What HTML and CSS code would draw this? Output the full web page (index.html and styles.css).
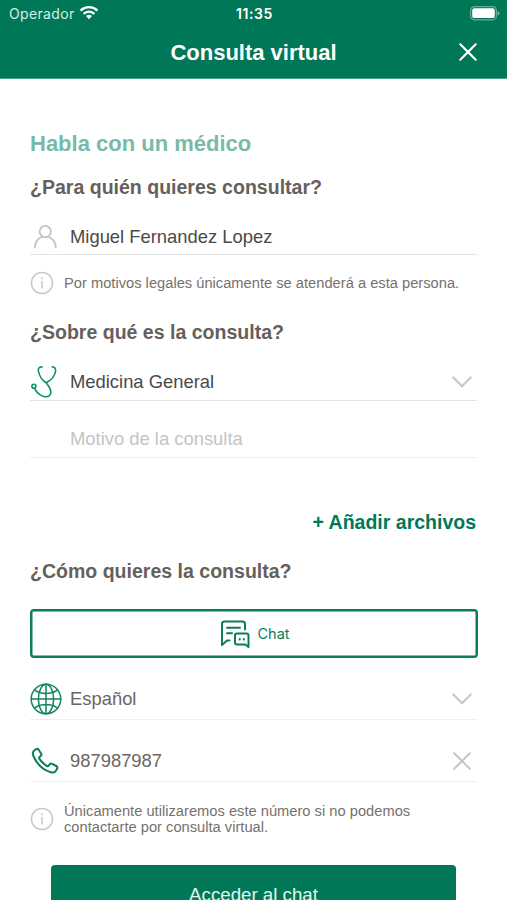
FILE: index.html
```
<!DOCTYPE html>
<html lang="es">
<head>
<meta charset="utf-8">
<title>Consulta virtual</title>
<meta name="viewport" content="width=device-width, initial-scale=1">
<link rel="stylesheet" href="styles.css">
</head>

<body>
<header class="header">
  <div class="status-bar">
    <div class="carrier">
      <span>Operador</span>
      <svg class="wifi" width="20" height="15" viewBox="0 0 20 15" fill="none" stroke="#fff" stroke-width="2.4">
        <path d="M1.6 5.6a12 12 0 0 1 16.8 0"/>
        <path d="M4.6 8.8a7.8 7.8 0 0 1 10.8 0"/>
        <path d="M10 14.2l-3-3.1a4.4 4.4 0 0 1 6 0z" fill="#fff" stroke="none"/>
      </svg>
    </div>
    <span class="clock">11:35</span>
    <svg class="battery" width="30" height="15" viewBox="0 0 30 15">
      <rect x=".6" y=".6" width="25.8" height="13.2" rx="3.8" fill="none" stroke="#fff" stroke-opacity=".4" stroke-width="1.2"/>
      <rect x="2.2" y="2.3" width="22.6" height="9.8" rx="2.2" fill="#fff"/>
      <path d="M27.7 5v4.6q1.7-.7 1.7-2.3T27.7 5z" fill="#fff" fill-opacity=".5"/>
    </svg>
  </div>
  <div class="title-bar">
    <h1 class="title">Consulta virtual</h1>
    <button type="button" class="close-btn" aria-label="Cerrar">
      <svg width="18" height="18" viewBox="0 0 18 18" fill="none" stroke="#fff" stroke-width="2.2" stroke-linecap="round">
        <path d="M1.3 1.3l15.4 15.4M16.7 1.3L1.3 16.7"/>
      </svg>
    </button>
  </div>
</header>

<main class="content">
  <h2 class="heading">Habla con un médico</h2>

  <h3 class="question question-who">¿Para quién quieres consultar?</h3>
  <div class="field field-person">
    <span class="field-icon">
      <svg width="30" height="26" viewBox="0 0 30 26" fill="none" stroke="#c4c4c4" stroke-width="1.9" stroke-linecap="round">
        <circle cx="15.3" cy="7.6" r="5.7"/>
        <path d="M4.8 23.5c.3-5.5 3-8.8 7-10.5M25.8 23.5c-.3-5.5-3-8.8-7-10.5"/>
      </svg>
    </span>
    <span class="value">Miguel Fernandez Lopez</span>
  </div>
  <div class="info info-legal">
    <svg class="info-icon" width="24" height="24" viewBox="0 0 24 24" fill="none" stroke="#c8c8c8" stroke-width="1.5">
      <circle cx="12" cy="12" r="10.6"/>
      <path d="M12 10v7.5M12 6.3v1.9"/>
    </svg>
    <p>Por motivos legales únicamente se atenderá a esta persona.</p>
  </div>

  <h3 class="question question-what">¿Sobre qué es la consulta?</h3>
  <div class="field field-specialty">
    <span class="field-icon">
      <svg width="30" height="34" viewBox="0 0 30 34" fill="none" stroke="#12906a" stroke-width="1.6" stroke-linecap="round" stroke-linejoin="round">
        <path d="M12 1.9c-2.7 0-4.2 1.6-3.7 3.9 1 4.3 3.8 9.8 8 12 4.7-2.5 8.3-7 9.2-11.2.5-2.7-.6-4.5-3.2-4.7"/>
        <path d="M16.3 17.9c1.5 2.3 5.2 6.3 4.5 10.2-.8 4-5.6 4.5-9.3 2.5-3.5-1.9-5.9-4.8-6.9-7.5"/>
        <circle cx="3.9" cy="21.2" r="2"/>
      </svg>
    </span>
    <span class="value">Medicina General</span>
    <svg class="field-action" width="20" height="12" viewBox="0 0 20 12" fill="none" stroke="#c8c8c8" stroke-width="2.2" stroke-linecap="round">
      <path d="M1.3 1.5l8.7 8.7 8.7-8.7"/>
    </svg>
  </div>
  <div class="field field-reason">
    <span class="field-icon"></span>
    <span class="value placeholder">Motivo de la consulta</span>
  </div>
  <a class="add-files">+ Añadir archivos</a>

  <h3 class="question question-how">¿Cómo quieres la consulta?</h3>
  <button type="button" class="chat-option">
    <svg width="30" height="28" viewBox="0 0 30 28" fill="none" stroke="#0b7d5c" stroke-width="2" stroke-linecap="round" stroke-linejoin="round">
      <path d="M9.5 20.5H7L2 25V4q0-2.500 2.500-2.500h18Q25 1.500 25 4v5.500"/>
      <path d="M7 7.800h13M7 13.300h5"/>
      <path d="M17 13.500h9.500q2 0 2 2V27l-3.200-2.500H17q-2 0-2-2v-7q0-2 2-2z"/>
      <path d="M19.700 19v.6M23.800 19v.6"/>
    </svg>
    <span>Chat</span>
  </button>

  <div class="field field-language">
    <span class="field-icon">
      <svg width="32" height="32" viewBox="0 0 32 32" fill="none" stroke="#12835f" stroke-width="1.5">
        <circle cx="16" cy="16" r="14.8"/>
        <ellipse cx="16" cy="16" rx="7.6" ry="14.8"/>
        <path d="M16 1.2v29.6M1.2 16h29.6M4.5 6.8c6 4.8 17 4.8 23 0M4.5 25.2c6-4.8 17-4.8 23 0"/>
      </svg>
    </span>
    <span class="value muted">Español</span>
    <svg class="field-action" width="20" height="12" viewBox="0 0 20 12" fill="none" stroke="#c8c8c8" stroke-width="2.2" stroke-linecap="round">
      <path d="M1.3 1.5l8.7 8.7 8.7-8.7"/>
    </svg>
  </div>
  <div class="field field-phone">
    <span class="field-icon">
      <svg width="30" height="28" viewBox="0 0 30 28" fill="none" stroke="#0b7d5c" stroke-width="2" stroke-linejoin="round">
        <path d="M4.2 3.5l2-1.3c1-.6 1.900-.3 2.500.6l2.400 3.700c.6 1 .4 1.800-.4 2.500l-1 .8c-.7.700-.7 1.500-.1 2.400 2 2.800 4 4.700 7 6.600.9.600 1.700.4 2.300-.4l.8-1.100c.6-.8 1.500-1 2.400-.5l4.200 2.200c1 .5 1.300 1.500.8 2.500l-.9 1.900c-1 2-3 2.600-5.400 1.900C12.500 22.800 6.500 16.500 3.200 8.500 2.500 6.500 2.700 4.800 4.200 3.500z"/>
      </svg>
    </span>
    <span class="value muted">987987987</span>
    <svg class="field-action" width="20" height="20" viewBox="0 0 20 20" fill="none" stroke="#c8c8c8" stroke-width="2.2" stroke-linecap="round">
      <path d="M2.2 2.2l15.6 15.6M17.8 2.2L2.2 17.8"/>
    </svg>
  </div>
  <div class="info info-phone">
    <svg class="info-icon" width="24" height="24" viewBox="0 0 24 24" fill="none" stroke="#c8c8c8" stroke-width="1.5">
      <circle cx="12" cy="12" r="10.6"/>
      <path d="M12 10v7.5M12 6.3v1.9"/>
    </svg>
    <p>Únicamente utilizaremos este número si no podemos<br>contactarte por consulta virtual.</p>
  </div>

  <button type="button" class="submit-btn">Acceder al chat</button>
</main>
</body>
</html>
```
FILE: styles.css
```
* {
  box-sizing: border-box;
}

html, body {
  height: 100%;
}

body {
  margin: 0;
  overflow: hidden;
  background: #fff;
  color: #66605c;
  font-family: "Liberation Sans", Arial, sans-serif;
}

h1, h2, h3, p {
  margin: 0;
}

button {
  padding: 0;
  font: inherit;
}

.header {
  height: 79px;
  background: #007858;
  border-bottom: 1px solid #4da38d;
  color: #fff;
}

.status-bar {
  display: grid;
  grid-template-columns: 1fr auto 1fr;
  align-items: center;
  height: 27px;
  padding: 0 7px 0 9px;
  font-family: Inter, sans-serif;
  font-size: 14px;
}

.carrier {
  display: flex;
  align-items: center;
  gap: 4px;
  color: #d5eee6;
  letter-spacing: 0.35px;
}

.wifi {
  margin-top: -3px;
}

.clock {
  font-weight: 600;
  letter-spacing: 0.6px;
}

.battery {
  justify-self: end;
}

.title-bar {
  display: grid;
  grid-template-columns: 1fr auto 1fr;
  align-items: center;
  height: 51px;
  padding: 0 30px;
}

.title {
  grid-column: 2;
  font-size: 22px;
  line-height: 26px;
}

.close-btn {
  display: flex;
  justify-self: end;
  margin-bottom: 1px;
  border: 0;
  background: none;
}

.content {
  padding: 52px 30px 0;
}

.heading {
  color: #78baa7;
  font-size: 22px;
  line-height: 26px;
}

.question {
  color: #66605c;
  font-size: 19.55px;
  line-height: 24px;
}

.question-who {
  margin-top: 18px;
}

.question-what {
  margin-top: 21px;
}

.question-how {
  margin-top: 25px;
}

.field {
  display: flex;
  align-items: center;
  border-bottom: 1px solid #e3e3e3;
}

.field-icon {
  display: flex;
  flex: 0 0 40px;
}

.value {
  flex: 1;
  color: #4a4a4a;
  font-size: 18.4px;
}

.value.muted {
  color: #6b6663;
}

.value.placeholder {
  color: #c4c4c4;
}

.field-action {
  margin-right: 5px;
}

.field-person {
  height: 36px;
  margin-top: 20px;
}

.field-specialty {
  height: 38px;
  margin-top: 19px;
}

.field-reason {
  height: 38px;
  margin-top: 19px;
  border-color: #efefef;
}

.field-language,
.field-phone {
  height: 41px;
  margin-top: 21px;
  padding-bottom: 1px;
  border-color: #efefef;
}

.info {
  display: flex;
  align-items: center;
  gap: 10px;
  height: 32px;
  font-size: 14.7px;
  line-height: 16px;
  color: #77716d;
}

.info-legal {
  margin-top: 12px;
}

.info-phone {
  margin-top: 21px;
}

.add-files {
  display: block;
  margin-top: 52px;
  padding-right: 1px;
  color: #007858;
  font-size: 19.5px;
  font-weight: bold;
  line-height: 24px;
  text-align: right;
}

.chat-option {
  display: flex;
  align-items: center;
  justify-content: center;
  gap: 7px;
  width: 448px;
  height: 49px;
  margin-top: 26px;
  padding-left: 2px;
  border: 2px solid #0b7d5c;
  border-radius: 4px;
  box-shadow: inset 0 0 0 0.5px #0b7d5c;
  background: #fff;
  color: #0b7d5c;
  font-family: Inter, sans-serif;
  font-size: 14.5px;
}

.submit-btn {
  display: block;
  width: 405px;
  height: 60px;
  margin: 30px 0 0 21px;
  border: 0;
  border-radius: 4px;
  background: #007858;
  color: #e3f5ee;
  font-size: 18.7px;
}
```
